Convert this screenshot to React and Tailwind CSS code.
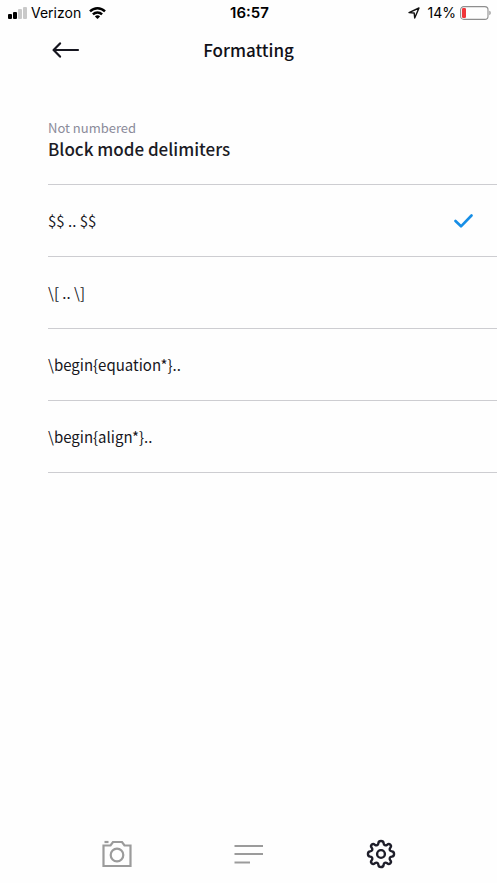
import React, { useState } from "react";

const delimiters = [
  { id: "dollars", label: "$$ .. $$" },
  { id: "brackets", label: "\\[ .. \\]" },
  { id: "equation", label: "\\begin{equation*}.." },
  { id: "align", label: "\\begin{align*}.." },
];

function StatusBar() {
  return (
    <div className="grid grid-cols-3 items-center h-[26px] pl-2 pr-1.5 text-sm leading-6 text-black font-['Inter','Liberation_Sans',sans-serif]">
      <div className="flex items-center gap-1">
        <svg width="19" height="12" viewBox="0 0 19 12">
          <rect x="0" y="7" width="4" height="5" rx="1" fill="#000" />
          <rect x="5" y="5" width="4" height="7" rx="1" fill="#000" />
          <rect x="10" y="2" width="4" height="10" rx="1" fill="#c9c9c9" />
          <rect x="15" y="0" width="4" height="12" rx="1" fill="#c9c9c9" />
        </svg>
        <span>Verizon</span>
        <svg className="ml-1" width="17" height="12" viewBox="0 0 17 12" fill="none" stroke="#000" strokeWidth="2.4">
          <path d="M1 4.4C5.2 0.2 11.8 0.2 16 4.4" />
          <path d="M3.9 7.3C6.5 4.8 10.5 4.8 13.1 7.3" />
          <path d="M8.5 12L5.9 9.4C7.3 8 9.7 8 11.1 9.4Z" fill="#000" stroke="none" />
        </svg>
      </div>
      <div className="text-center text-[15px] leading-6 font-semibold">16:57</div>
      <div className="flex items-center justify-end gap-1">
        <svg className="mr-1" width="12" height="12" viewBox="0 0 12 12" fill="none" stroke="#111" strokeWidth="1.4" strokeLinejoin="round">
          <path d="M1 5.6L11 1L6.7 11L6.2 6Z" />
        </svg>
        <span>14%</span>
        <svg width="31" height="14" viewBox="0 0 31 14">
          <rect x="0.6" y="0.6" width="27.4" height="12.8" rx="3.2" fill="none" stroke="#8e8e8e" strokeWidth="1.1" />
          <rect x="2" y="2" width="4" height="10" rx="1.2" fill="#f0363a" />
          <path d="M29.4 4.8C31.1 5.4 31.1 8.6 29.4 9.2Z" fill="#8e8e8e" />
        </svg>
      </div>
    </div>
  );
}

function Header() {
  return (
    <header className="grid grid-cols-[1fr_auto_1fr] items-center h-12 px-12">
      <button type="button" aria-label="Back" className="w-9 h-9 flex items-center justify-center cursor-pointer">
        <svg width="28" height="16" viewBox="0 0 28 16" fill="none" stroke="#16161f" strokeWidth="2.2" strokeLinecap="round" strokeLinejoin="round">
          <path d="M26 8H2M8 1.4L1.6 8L8 14.6" />
        </svg>
      </button>
      <h1 className="text-[17px] leading-6 font-medium text-[#111118]">Formatting</h1>
    </header>
  );
}

function DelimiterRow({ item, checked, onChange }) {
  return (
    <label className="flex items-center justify-between h-18 pr-6 border-b border-[#cdcdd1] cursor-pointer">
      <input
        type="radio"
        name="delimiter"
        value={item.id}
        checked={checked}
        onChange={onChange}
        className="sr-only"
      />
      <span className="text-[15px] leading-6">{item.label}</span>
      {checked && (
        <svg width="19" height="14" viewBox="0 0 19 14" fill="none" stroke="#168ee6" strokeWidth="2.6" strokeLinecap="round" strokeLinejoin="round">
          <path d="M1.5 7L7 12.3L17.5 1.5" />
        </svg>
      )}
    </label>
  );
}

function TabBar() {
  return (
    <nav className="flex justify-center gap-[102px] pb-[13px]">
      <button type="button" aria-label="Camera" className="w-[30px] h-8 flex items-center justify-center cursor-pointer">
        <svg width="30" height="28" viewBox="0 0 30 28" fill="none" stroke="#9b9b9b" strokeWidth="2.2">
          <path d="M1.5 5.5H8.5L11 2H20L22.5 5.5H28.5V26H1.5Z" />
          <path d="M2.5 2H6.5" />
          <circle cx="15" cy="15" r="6.3" />
        </svg>
      </button>
      <button type="button" aria-label="Snips" className="w-[30px] h-8 flex items-center justify-center cursor-pointer">
        <svg width="30" height="20" viewBox="0 0 30 20" fill="none" stroke="#9b9b9b" strokeWidth="2.2">
          <path d="M0.5 2H29M0.5 10H29M0.5 18.5H16" />
        </svg>
      </button>
      <button type="button" aria-label="Settings" className="w-[30px] h-8 flex items-center justify-center cursor-pointer">
        <svg width="30" height="30" viewBox="0 0 30 30" fill="none" stroke="#1e1e2a" strokeWidth="2.4" strokeLinejoin="round">
          <path d="M12.4 4.2C12.7 1.2 17.3 1.2 17.6 4.2C17.8 6.3 19.5 7 21.2 5.7C23.4 3.8 26.2 6.6 24.3 8.8C23 10.5 23.7 12.2 25.8 12.4C28.8 12.7 28.8 17.3 25.8 17.6C23.7 17.8 23 19.5 24.3 21.2C26.2 23.4 23.4 26.2 21.2 24.3C19.5 23 17.8 23.7 17.6 25.8C17.3 28.8 12.7 28.8 12.4 25.8C12.2 23.7 10.5 23 8.8 24.3C6.6 26.2 3.8 23.4 5.7 21.2C7 19.5 6.3 17.8 4.2 17.6C1.2 17.3 1.2 12.7 4.2 12.4C6.3 12.2 7 10.5 5.7 8.8C3.8 6.6 6.6 3.8 8.8 5.7C10.5 7 12.2 6.3 12.4 4.2Z" />
          <circle cx="15" cy="15" r="3.9" />
        </svg>
      </button>
    </nav>
  );
}

function App() {
  const [selected, setSelected] = useState("dollars");

  return (
    <div className="min-h-screen flex flex-col bg-[#fefefe] text-[#16161c] font-['Noto_Sans_CJK_SC','Noto_Sans',sans-serif]">
      <StatusBar />
      <Header />
      <main className="flex-1 pl-12 pt-11">
        <div className="pb-6 border-b border-[#cdcdd1]">
          <p className="text-[13px] leading-5 text-[#8b8b9a]">Not numbered</p>
          <h2 className="text-[17px] leading-[22px] font-medium text-[#1b1b25]">Block mode delimiters</h2>
        </div>
        <div role="radiogroup" aria-label="Block mode delimiters">
          {delimiters.map((item) => (
            <DelimiterRow
              key={item.id}
              item={item}
              checked={selected === item.id}
              onChange={() => setSelected(item.id)}
            />
          ))}
        </div>
      </main>
      <TabBar />
    </div>
  );
}

export default App;
